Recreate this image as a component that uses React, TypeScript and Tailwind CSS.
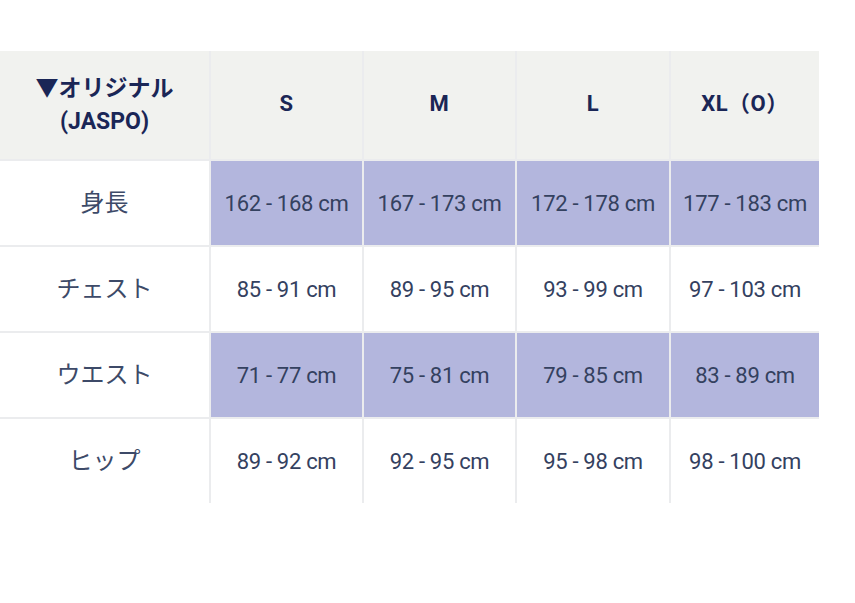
const SIZES = ["S", "M", "L", "XL（O）"];

const ROWS = [
  { label: "身長", values: ["162 - 168 cm", "167 - 173 cm", "172 - 178 cm", "177 - 183 cm"], shaded: true },
  { label: "チェスト", values: ["85 - 91 cm", "89 - 95 cm", "93 - 99 cm", "97 - 103 cm"], shaded: false },
  { label: "ウエスト", values: ["71 - 77 cm", "75 - 81 cm", "79 - 85 cm", "83 - 89 cm"], shaded: true },
  { label: "ヒップ", values: ["89 - 92 cm", "92 - 95 cm", "95 - 98 cm", "98 - 100 cm"], shaded: false },
];

const FONT = {
  fontFamily: "Roboto, 'Noto Sans CJK JP', sans-serif",
};

export default function App() {
  return (
    <div className="h-[603px] w-[855px] bg-white pt-[51px]" style={FONT}>
      <div className="grid w-[819px] grid-cols-[209px_151px_151px_152px_148px] grid-rows-[108px_84px_84px_84px_84px] gap-[2px] bg-[#ebecee]">
        <div className="flex flex-col items-center justify-center bg-[#f1f2ef] text-[23px] font-bold leading-[33px] text-[#1a2656]">
          <span>▼オリジナル</span>
          <span>(JASPO)</span>
        </div>
        {SIZES.map((s) => (
          <div
            key={s}
            className="flex items-center justify-center bg-[#f1f2ef] pb-[4px] text-[22px] font-bold tracking-[0.5px] text-[#1a2656]"
          >
            {s}
          </div>
        ))}
        {ROWS.map((row) => (
          <>
            <div
              key={row.label}
              className="flex items-center justify-center bg-white text-[24px] font-normal text-[#3d4a68]"
            >
              {row.label}
            </div>
            {row.values.map((v, i) => (
              <div
                key={row.label + i}
                className={`flex items-center justify-center text-[22px] tracking-[-0.3px] text-[#34415f] ${
                  row.shaded ? "bg-[#b3b6dd]" : "bg-white"
                }`}
              >
                {v}
              </div>
            ))}
          </>
        ))}
      </div>
    </div>
  );
}
